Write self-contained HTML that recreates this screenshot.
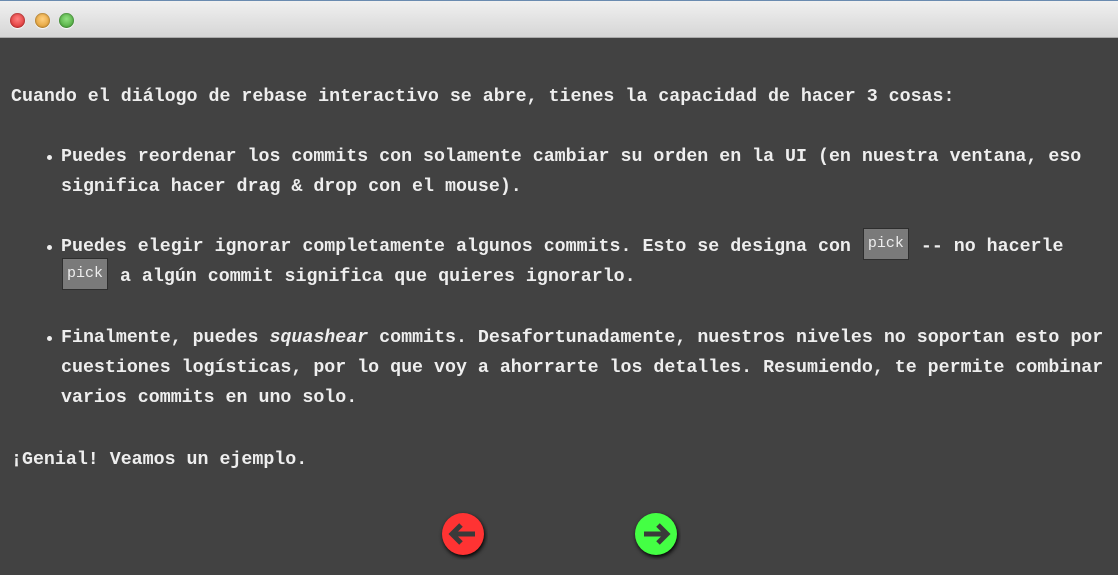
<!DOCTYPE html>
<html><head><meta charset="utf-8"><style>
html,body{margin:0;padding:0;width:1118px;height:575px;overflow:hidden;background:#424242;}
.tb{position:absolute;left:0;top:0;width:1118px;height:38px;background:linear-gradient(#f0f0f0,#d6d6d6);border-top:1px solid #6a8bb0;box-sizing:border-box;border-bottom:1px solid #aaa}
.dot{position:absolute;top:12px;width:15px;height:15px;border-radius:50%;box-shadow:0 1px 1px #fff,inset 0 0 2px rgba(0,0,0,.5)}
.t{position:absolute;left:11px;color:#eee;font:bold 18.3px/30px "Liberation Mono",monospace;white-space:pre;}
.b{position:absolute;left:47px;width:5px;height:5px;border-radius:50%;background:#eee}
.c{display:inline-block;background:#7a7a7a;border:1px solid #2e2e2e;font:15px/30px "Liberation Mono",monospace;padding:0 4px;margin:0 1px;color:#eee;height:30px;vertical-align:middle;margin-top:-4px}
</style></head><body>
<div class="tb">
<div class="dot" style="left:10px;background:radial-gradient(circle at 50% 40%,#ff8080,#d42020)"></div>
<div class="dot" style="left:35px;background:radial-gradient(circle at 50% 40%,#ffd080,#d89020)"></div>
<div class="dot" style="left:59px;background:radial-gradient(circle at 50% 40%,#90e080,#3a9a2a)"></div>
</div>
<div class="t" style="top:82px">Cuando el diálogo de rebase interactivo se abre, tienes la capacidad de hacer 3 cosas:</div>
<div class="b" style="top:155px"></div>
<div class="t" style="top:142px;left:61px">Puedes reordenar los commits con solamente cambiar su orden en la UI (en nuestra ventana, eso
significa hacer drag &amp; drop con el mouse).</div>
<div class="b" style="top:245px"></div>
<div class="t" style="top:232px;left:61px">Puedes elegir ignorar completamente algunos commits. Esto se designa con <span class="c">pick</span> -- no hacerle
<span class="c">pick</span> a algún commit significa que quieres ignorarlo.</div>
<div class="b" style="top:336px"></div>
<div class="t" style="top:323px;left:61px">Finalmente, puedes <i>squashear</i> commits. Desafortunadamente, nuestros niveles no soportan esto por
cuestiones logísticas, por lo que voy a ahorrarte los detalles. Resumiendo, te permite combinar
varios commits en uno solo.</div>
<div class="t" style="top:445px">¡Genial! Veamos un ejemplo.</div>
<svg style="position:absolute;left:438px;top:510px" width="50" height="50" viewBox="0 0 50 50">
<circle cx="25" cy="24" r="21" fill="#f33" style="filter:drop-shadow(1px 2px 2px #000)"/>
<path d="M37 24H14M23 15l-9 9 9 9" stroke="#3a3a3a" stroke-width="5" fill="none"/>
</svg>
<svg style="position:absolute;left:631px;top:510px" width="50" height="50" viewBox="0 0 50 50">
<circle cx="25" cy="24" r="21" fill="#4f4" style="filter:drop-shadow(1px 2px 2px #000)"/>
<path d="M13 24H36M27 15l9 9-9 9" stroke="#3a3a3a" stroke-width="5" fill="none"/>
</svg>
</body></html>
